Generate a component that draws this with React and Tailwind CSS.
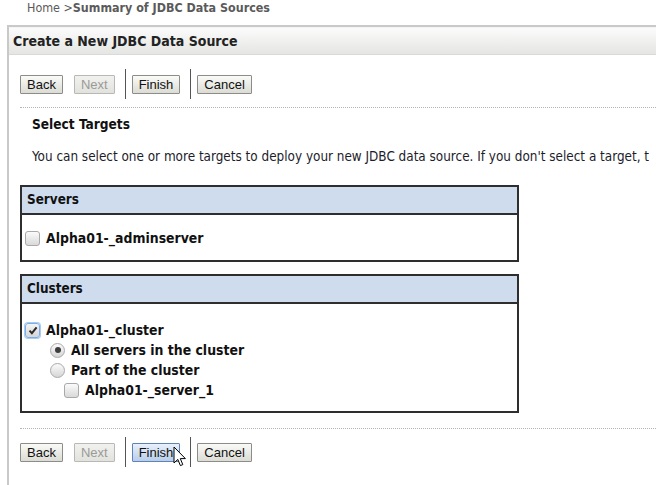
import React from 'react';

const uiFont = { fontFamily: '"DejaVu Sans Condensed", "DejaVu Sans", sans-serif' };

const Button = ({ label, disabled = false, hover = false }) => (
  <button
    disabled={disabled}
    className={`h-[19px] px-[6px] border text-[13px] leading-[17px] rounded-[1px] ${
      disabled
        ? 'border-[#b8b8b4] text-[#9a9a98] bg-gradient-to-b from-[#f1f1ef] to-[#e2e2dd]'
        : hover
        ? 'border-[#5f82b8] text-[#111] bg-gradient-to-b from-[#e8f0fb] to-[#b8cde9]'
        : 'border-[#8c8c88] text-[#111] bg-gradient-to-b from-[#fafaf8] to-[#dcdcd5]'
    }`}
    style={{ fontFamily: '"Liberation Sans", Arial, sans-serif' }}
  >
    {label}
  </button>
);

const ButtonRow = ({ hoverFinish = false }) => (
  <div className="flex items-center h-[30px]">
    <Button label="Back" />
    <div className="w-[11px]" />
    <Button label="Next" disabled />
    <div className="w-px h-[30px] bg-[#555] ml-[10px] mr-[6px]" />
    <div className="relative">
      <Button label="Finish" hover={hoverFinish} />
      {hoverFinish && (
        <svg className="absolute left-[41px] top-[6px]" width="14" height="22" viewBox="0 0 14 22">
          <path
            d="M1 1 L1 17 L4.8 13.4 L7.4 19.6 L9.8 18.6 L7.3 12.6 L12.4 12.6 Z"
            fill="#fff"
            stroke="#000"
            strokeWidth="1"
          />
        </svg>
      )}
    </div>
    <div className="w-px h-[30px] bg-[#555] ml-[10px] mr-[6px]" />
    <Button label="Cancel" />
  </div>
);

const Checkbox = ({ checked = false }) => (
  <span
    className={`inline-flex items-center justify-center w-[15px] h-[15px] rounded-[3px] border shrink-0 ${
      checked
        ? 'border-[#79aeea] shadow-[0_0_0_1px_#a9cbf2] bg-gradient-to-b from-[#f4f4f4] to-[#d6d6d6]'
        : 'border-[#a9a9a9] bg-gradient-to-b from-[#fbfbfb] to-[#d9d9d9]'
    }`}
  >
    {checked && (
      <svg width="10" height="9" viewBox="0 0 10 9">
        <path d="M1.5 4.6 L3.9 7.2 L8.6 1.4" fill="none" stroke="#2a2a2a" strokeWidth="2" />
      </svg>
    )}
  </span>
);

const Radio = ({ checked = false }) => (
  <span className="inline-flex items-center justify-center w-[15px] h-[15px] rounded-full border border-[#a9a9a9] bg-gradient-to-b from-[#fbfbfb] to-[#d6d6d6] shrink-0">
    {checked && <span className="w-[6px] h-[6px] rounded-full bg-[#3d3d3d]" />}
  </span>
);

const Table = ({ title, children }) => (
  <div className="w-[499px] border-2 border-[#2e2e2e]">
    <div className="h-[28px] flex items-center px-[5px] bg-[#cfdcee] border-b-2 border-[#2e2e2e] font-bold text-[13.4px] text-[#111]">
      {title}
    </div>
    {children}
  </div>
);

const Row = ({ indent, children }) => (
  <div className="flex items-center h-[20px] gap-[6px] font-bold text-[13.9px] text-[#111]" style={{ paddingLeft: indent }}>
    {children}
  </div>
);

export default function App() {
  return (
    <div className="w-[656px] h-[485px] overflow-hidden bg-white whitespace-nowrap" style={uiFont}>
      {/* breadcrumb */}
      <div className="h-[25px] pl-[27px] text-[12.4px] leading-[16px] text-[#5a5a5a]">
        Home &gt;<span className="font-bold">Summary of JDBC Data Sources</span>
      </div>

      <div className="ml-[7px] border-l-2 border-t-2 border-[#c9c9c9] h-[460px]">
        <div className="h-[28px] flex items-center pl-[4px] border-t border-[#f4f4f4] border-b border-b-[#dadada] bg-gradient-to-b from-[#fbfbfb] to-[#e5e6e3] font-bold text-[14px] text-[#222]">
          Create a New JDBC Data Source
        </div>

        <div className="pl-[11px]">
          <div className="pt-[14px]">
            <ButtonRow />
          </div>
          <div className="mt-[8px] border-t border-dotted border-[#b5b5b5]" />

          <div className="pl-[12px] pt-[8px] font-bold text-[13.6px] leading-[16px] text-[#111]">Select Targets</div>
          <div className="pl-[12px] mt-[17px] text-[13.4px] leading-[16px] text-[#1c1c2c]">
            You can select one or more targets to deploy your new JDBC data source. If you don't select a target, t
          </div>

          <div className="mt-[20px]">
            <Table title="Servers">
              <div className="pl-[3px] pt-[13px] pb-[12px]">
                <Row indent={0}>
                  <Checkbox />
                  <span>Alpha01-_adminserver</span>
                </Row>
              </div>
            </Table>
          </div>

          <div className="mt-[12px]">
            <Table title="Clusters">
              <div className="pl-[3px] pt-[16px] pb-[11px]">
                <Row indent={0}>
                  <Checkbox checked />
                  <span>Alpha01-_cluster</span>
                </Row>
                <Row indent={25}>
                  <Radio checked />
                  <span>All servers in the cluster</span>
                </Row>
                <Row indent={25}>
                  <Radio />
                  <span>Part of the cluster</span>
                </Row>
                <Row indent={39}>
                  <Checkbox />
                  <span>Alpha01-_server_1</span>
                </Row>
              </div>
            </Table>
          </div>

          <div className="mt-[15px] border-t border-dotted border-[#b5b5b5]" />
          <div className="pt-[8px]">
            <ButtonRow hoverFinish />
          </div>
        </div>
      </div>
    </div>
  );
}
